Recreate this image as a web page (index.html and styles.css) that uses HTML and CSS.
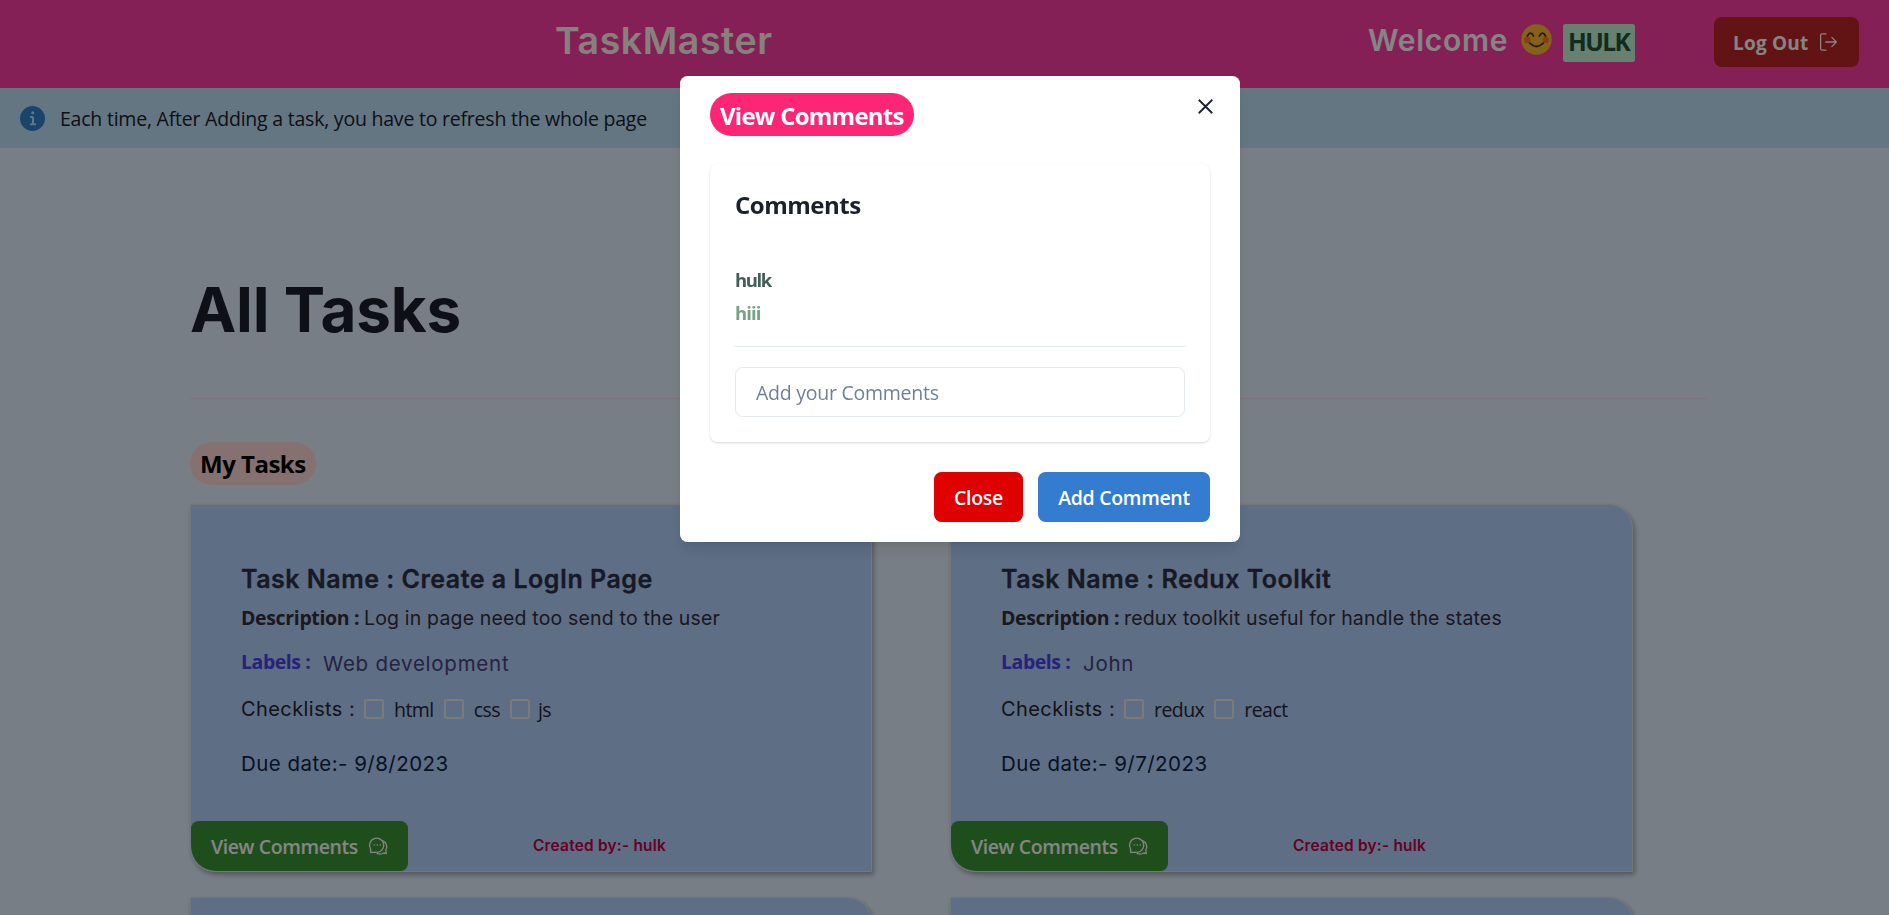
FILE: index.html
```html
<!DOCTYPE html>
<html lang="en">
<head>
<meta charset="utf-8">
<title>TaskMaster</title>
<link rel="stylesheet" href="styles.css">
</head>
<body>
<svg class="defs" aria-hidden="true">
  <symbol id="chat" viewBox="0 0 20 20">
    <g fill="none" stroke="currentColor" stroke-width="1.3" stroke-linejoin="round">
      <path d="M2.6 16.400 V13 A7.1 7.1 0 1 1 8.600 16.400 Z"/>
      <path d="M14.6 4.6 A6.6 6.6 0 0 1 17.8 14 L18.2 17.6 L15.8 17 A7.4 7.4 0 0 1 9.6 17.6 L8.4 16.4"/>
    </g>
    <g fill="currentColor"><circle cx="6.3" cy="9" r=".8"/><circle cx="9.3" cy="9" r=".8"/><circle cx="12.3" cy="9" r=".8"/></g>
  </symbol>
</svg>
<div class="page">
  <header class="topbar">
    <div class="brand">TaskMaster</div>
    <div class="welcome">
      <span class="hello">Welcome</span>
      <svg class="smile" viewBox="0 0 32 32">
        <circle cx="16" cy="16" r="15.7" fill="#ffbc2e"/>
        <circle cx="6.5" cy="16.4" r="3.3" fill="#ff7a2f"/><circle cx="25.5" cy="16.4" r="3.3" fill="#ff7a2f"/>
        <g fill="none" stroke="#4a2f2a" stroke-width="1.8" stroke-linecap="round">
          <path d="M6.6 12.4 Q9.8 6.600 13 12.400"/><path d="M19 12.400 Q22.200 6.600 25.400 12.400"/><path d="M9 19.800 Q16 26.600 23 19.800"/>
        </g>
      </svg>
      <span class="user">HULK</span>
    </div>
    <button class="logout"><span>Log Out</span>
      <svg viewBox="0 0 20 20" fill="none" stroke="currentColor" stroke-width="1.3" stroke-linecap="round" stroke-linejoin="round"><path d="M8 1.800 H4.200 Q2.600 1.800 2.600 3.400 V16.600 Q2.600 18.200 4.200 18.200 H8"/><path d="M7.800 10 H18.400 M13.800 5.400 L18.400 10 L13.800 14.600"/></svg>
    </button>
  </header>
  <div class="notice">
    <svg viewBox="0 0 24 24"><path fill="currentColor" d="M12 0a12 12 0 1 0 12 12A12.013 12.013 0 0 0 12 0Zm.25 5a1.500 1.500 0 1 1-1.500 1.500 1.500 1.500 0 0 1 1.500-1.500ZM14.500 18.500h-4a1 1 0 0 1 0-2h.750a.250.250 0 0 0 .250-.250v-4.500a.250.250 0 0 0-.250-.250h-.750a1 1 0 0 1 0-2h1a2 2 0 0 1 2 2v4.750a.250.250 0 0 0 .250.250h.750a1 1 0 1 1 0 2Z"/></svg>
    <span>Each time, After Adding a task, you have to refresh the whole page</span>
  </div>
  <main class="content">
    <h1>All Tasks</h1>
    <hr>
    <div class="mine">My Tasks</div>
    <div class="grid">
      <article class="card">
        <h2>Task Name : Create a LogIn Page</h2>
        <div class="desc"><b>Description :</b><span>Log in page need too send to the user</span></div>
        <div class="labels"><b>Labels :</b><span>Web development</span></div>
        <div class="checks"><span class="cap">Checklists :</span><i></i><label>html</label><i></i><label>css</label><i></i><label class="tight">js</label></div>
        <div class="due">Due date:- 9/8/2023</div>
        <div class="foot"><button class="view"><span>View Comments</span><svg><use href="#chat"/></svg></button><span class="by">Created by:- hulk</span></div>
      </article>
      <article class="card">
        <h2>Task Name : Redux Toolkit</h2>
        <div class="desc"><b>Description :</b><span>redux toolkit useful for handle the states</span></div>
        <div class="labels"><b>Labels :</b><span>John</span></div>
        <div class="checks"><span class="cap">Checklists :</span><i></i><label>redux</label><i></i><label>react</label></div>
        <div class="due">Due date:- 9/7/2023</div>
        <div class="foot"><button class="view"><span>View Comments</span><svg><use href="#chat"/></svg></button><span class="by">Created by:- hulk</span></div>
      </article>
      <article class="card"></article>
      <article class="card"></article>
    </div>
  </main>
</div>
<div class="overlay">
  <section class="modal">
    <div class="mhead"><span class="mtitle">View Comments</span>
      <svg class="x" viewBox="0 0 16 16"><path d="M.8.800 L15.200 15.200 M15.200.800 L.8 15.200" stroke="#1a202c" stroke-width="1.900"/></svg>
    </div>
    <div class="panel">
      <h3>Comments</h3>
      <div class="who">hulk</div>
      <div class="said">hiii</div>
      <input type="text" placeholder="Add your Comments">
    </div>
    <div class="actions"><button class="close">Close</button><button class="add">Add Comment</button></div>
  </section>
</div>
</body>
</html>
```
FILE: styles.css
```css
* { box-sizing: border-box; margin: 0; padding: 0; }
html, body { height: 915px; overflow: hidden; }
body { font-family: "Open Sans", "Noto Sans", sans-serif; font-size: 19.5px; line-height: 30px; color: #1a202c; }
button { border: 0; font: inherit; font-weight: 600; color: #fff; border-radius: 7.5px; height: 50px; }
.defs { position: absolute; width: 0; height: 0; }

.page { height: 915px; overflow: hidden; background: #e5f2ff; }
.topbar { display: flex; height: 88px; background: #ff3fa5; font-family: Inter, sans-serif; }
.brand { width: 812px; padding: 16px 0 0 555px; font-size: 37.5px; font-weight: 600; line-height: 50px; letter-spacing: .55px; color: #fffaf0; }
.welcome { display: flex; width: 902px; padding: 24px 0 0 556px; color: #fff; }
.hello { width: 153px; font-size: 30px; font-weight: 600; line-height: 32px; letter-spacing: .7px; }
.smile { width: 31px; height: 31px; margin-right: 11px; flex: none; }
.user { width: 72px; height: 38px; border-radius: 2.5px; background: #c6f6d5; color: #22543d; font: 700 24.5px/36px "Open Sans", sans-serif; letter-spacing: -1.5px; padding-left: 5px; }
.logout { display: flex; align-items: center; width: 145px; margin-top: 17px; padding: 2px 0 0 19px; background: #bc2626; font: 700 19px/30px "Open Sans", sans-serif; }
.logout span { width: 85px; text-align: left; letter-spacing: .2px; }
.logout svg { width: 20px; height: 20px; margin-top: -2px; }
.notice { display: flex; align-items: center; height: 60px; padding-left: 20px; background: #bee3f8; letter-spacing: -.22px; }
.notice svg { width: 25px; height: 25px; margin-right: 15px; color: #3182ce; }
.notice span { padding-top: 2px; }

.content { padding: 0 182px 0 190px; }
h1 { height: 249px; padding-top: 122px; font: 700 62px/80px Inter, sans-serif; letter-spacing: -.2px; }
hr { border: 0; height: 1px; margin-top: 1px; background: #eedfee; }
.mine { width: 126px; height: 43px; margin: 43px 0 19px; padding-left: 10px; border-radius: 22px; background: #ffdbd7; color: #000; font-weight: 700; font-size: 24px; line-height: 44px; letter-spacing: -.5px; }
.grid { display: grid; grid-template-columns: 682px 683px; column-gap: 78px; row-gap: 25px; }
.card { height: 368px; padding: 59px 0 0 50px; border: 1px solid #dfe5ec; border-radius: 0 25px 0 25px; background: #b3d3ff; box-shadow: 2px 3px 5px rgba(0,0,0,.3); overflow: hidden; font-family: Inter, sans-serif; }
h2 { height: 30px; font-size: 25px; font-weight: 600; line-height: 30px; letter-spacing: .5px; -webkit-text-stroke: .3px; color: #2d3048; }
.desc { display: flex; align-items: baseline; height: 30px; margin-top: 9px; font-size: 19.5px; letter-spacing: .17px; color: #352e3a; }
.desc b { width: 123px; font: 700 19.5px/30px "Open Sans", sans-serif; letter-spacing: -.35px; }
.labels { display: flex; height: 34px; margin-top: 13px; }
.labels b { width: 82px; font: 700 19.5px/32px "Open Sans", sans-serif; letter-spacing: -.45px; color: #4b44e4; }
.labels span { font-size: 20.5px; line-height: 36px; letter-spacing: .75px; color: #4a4183; }
.checks { display: flex; align-items: center; height: 30px; margin-top: 14px; color: #252530; }
.cap { width: 123px; font-size: 20px; letter-spacing: .42px; }
.checks i { width: 20px; height: 20px; border: 2px solid #edebe9; border-radius: 2.5px; }
.checks label { margin: 2px 10px 0; font-family: "Open Sans", sans-serif; letter-spacing: -.55px; }
.checks .tight { margin-left: 8px; }
.due { height: 30px; margin-top: 25px; font-size: 20.5px; letter-spacing: .45px; color: #0f2344; }
.foot { display: flex; margin: 42px 0 0 -50px; }
.view { display: flex; align-items: center; width: 217px; padding: 2px 0 0 20px; border-radius: 7.5px 7.5px 7.5px 25px; background: #3a9636; font-family: "Open Sans", sans-serif; letter-spacing: -.4px; }
.view span { width: 157px; text-align: left; white-space: nowrap; }
.view svg { width: 20px; height: 20px; margin-top: -2px; }
.by { padding: 10px 0 0 125px; font-size: 15.5px; font-weight: 600; letter-spacing: .18px; color: #c8003c; }

.overlay { position: fixed; inset: 0; display: flex; align-items: flex-start; padding: 76px 0 0 680px; background: rgba(0,0,0,.48); }
.modal { width: 560px; height: 466px; padding: 17px 30px 0; border-radius: 7.5px; background: #fff; box-shadow: 0 10px 15px -3px rgba(0,0,0,.1), 0 4px 6px -2px rgba(0,0,0,.05); }
.mhead { display: flex; justify-content: space-between; }
.mtitle { width: 204px; height: 43px; padding-left: 10px; border-radius: 22px; background: #fd2676; color: #fff; font-size: 24px; font-weight: 700; line-height: 45px; letter-spacing: -.75px; white-space: nowrap; }
.x { width: 15px; height: 15px; margin: 6px -3px 0 0; }
.panel { height: 278px; margin-top: 28px; padding: 25px; border-radius: 7.5px; box-shadow: 0 1px 3px rgba(0,0,0,.1), 0 1px 2px rgba(0,0,0,.06); }
h3 { height: 76px; font-size: 24px; font-weight: 700; line-height: 32px; letter-spacing: -.5px; }
.who, .said { font-weight: 700; font-size: 18.5px; letter-spacing: -1.4px; }
.who { height: 33px; color: #42605a; }
.said { height: 49px; color: #76a387; border-bottom: 1px solid #e2e8f0; letter-spacing: -.9px; }
.panel input { display: block; width: 100%; height: 50px; margin-top: 20px; padding: 1px 20px 0; border: 1px solid #e2e8f0; border-radius: 7.5px; font: inherit; letter-spacing: -.25px; }
.panel input::placeholder { color: #718096; opacity: 1; }
.actions { display: flex; justify-content: flex-end; gap: 15px; margin-top: 30px; }
.actions button { padding-top: 2px; letter-spacing: -.3px; }
.close { width: 89px; background: #df0000; }
.add { width: 172px; background: #337ccf; }
```
